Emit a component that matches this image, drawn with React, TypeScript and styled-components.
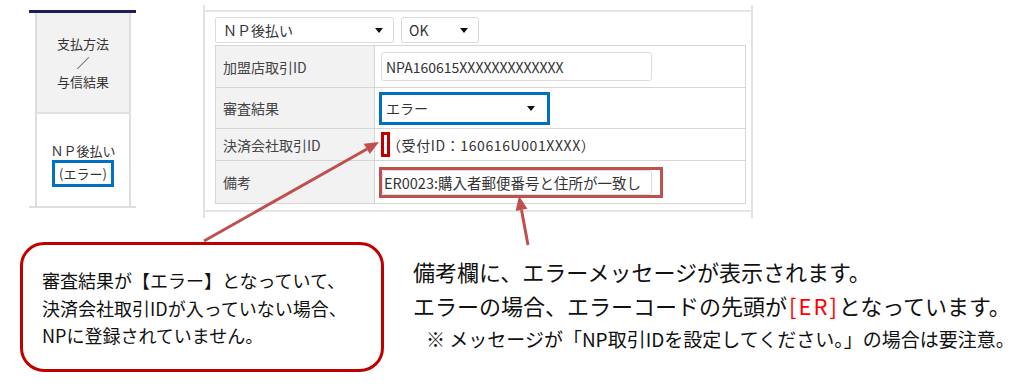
import { createGlobalStyle, styled } from "styled-components";

const GlobalStyle = createGlobalStyle`
  html, body {
    margin: 0;
    padding: 0;
    background: #ffffff;
  }
  body {
    font-family: "Noto Sans CJK JP", "Noto Sans", sans-serif;
  }
`;

const Page = styled.div`
  position: relative;
  width: 1024px;
  height: 392px;
  overflow: hidden;
  background: #ffffff;
`;

const TopRow = styled.div`
  display: flex;
  align-items: flex-start;
  height: 217px;
`;

/* left summary column */
const SummaryPanel = styled.div`
  margin: 10px 0 0 29px;
  width: 107px;
  border-top: 3px solid #1e1e5a;
  border-bottom: 2px solid #dedede;
`;

const SummaryColumn = styled.div`
  margin: 0 5px 0 6px;
  border-left: 2px solid #dedede;
  border-right: 2px solid #dedede;
`;

const SummaryHead = styled.div`
  height: 99px;
  background: #f2f2f2;
  border-bottom: 2px solid #e2e2e2;
  display: flex;
  flex-direction: column;
  align-items: center;
  justify-content: center;
  font-size: 13px;
  line-height: 19px;
  color: #333;
`;

const SummaryBody = styled.div`
  height: 92px;
  display: flex;
  flex-direction: column;
  align-items: center;
  padding-top: 28px;
  box-sizing: border-box;
  font-size: 13px;
  line-height: 17px;
  color: #333;
`;

const BlueMark = styled.span`
  margin-top: 1px;
  padding: 2px 4px;
  border: 3px solid #0070c0;
  line-height: 17px;
`;

/* form panel */
const FormPanel = styled.div`
  margin: 5px 0 0 67px;
  width: 550px;
  box-sizing: border-box;
  padding: 5px 0 6px;
  border-left: 2px solid #e2e2e2;
  border-right: 2px solid #e2e2e2;
`;

const FormInner = styled.div`
  border-top: 2px solid #e6e6e6;
  border-bottom: 2px solid #e6e6e6;
  padding: 5px 5px 6px 10px;
`;

const SelectRow = styled.div`
  display: flex;
  gap: 7px;
  margin-bottom: 2px;
`;

const Select = styled.div<{ width: number }>`
  width: ${(p) => p.width}px;
  height: 26px;
  box-sizing: border-box;
  border: 1px solid #dcdcdc;
  border-radius: 2px;
  background: #fff;
  display: flex;
  align-items: center;
  justify-content: space-between;
  padding: 0 10px 0 7px;
  font-size: 14px;
  color: #333;
`;

const Caret = styled.span`
  width: 0;
  height: 0;
  border-left: 4px solid transparent;
  border-right: 4px solid transparent;
  border-top: 5px solid #111;
`;

const Table = styled.div`
  display: grid;
  grid-template-columns: 159px 1fr;
  grid-template-rows: 42px 41px 32px 42px;
  border: 1px solid #d6d6d6;
`;

const LabelCell = styled.div<{ last?: boolean }>`
  background: #f2f2f2;
  border-bottom: ${(p) => (p.last ? "none" : "1px solid #d6d6d6")};
  border-right: 1px solid #d6d6d6;
  display: flex;
  align-items: center;
  padding-left: 7px;
  font-size: 14px;
  color: #444;
`;

const ValueCell = styled.div<{ last?: boolean; inset?: number }>`
  border-bottom: ${(p) => (p.last ? "none" : "1px solid #d6d6d6")};
  display: flex;
  align-items: center;
  padding-left: ${(p) => p.inset ?? 6}px;
  font-size: 14px;
  color: #333;
  white-space: nowrap;
`;

const TextInput = styled.div`
  width: 271px;
  height: 29px;
  box-sizing: border-box;
  border: 1px solid #dcdcdc;
  border-radius: 3px;
  display: flex;
  align-items: center;
  padding-left: 4px;
  white-space: nowrap;
  overflow: hidden;
`;

const Highlight = styled.div<{ color: string }>`
  border: 3px solid ${(p) => p.color};
  display: flex;
`;

const BlueSelect = styled(Select)`
  border: none;
  border-radius: 0;
  height: 27px;
  padding: 0 12px 0 4px;
`;

const NoteInput = styled(TextInput)`
  width: 270px;
  height: 25px;
  margin-right: 8px;
  padding-left: 1px;
  font-size: 14.5px;
`;

const EmptyMark = styled.span`
  display: inline-block;
  width: 3px;
  height: 19px;
  border: 3px solid #c00000;
  margin-right: -3px;
`;

const IdText = styled.span`
  letter-spacing: 0.6px;
`;

/* bottom row */
const BottomRow = styled.div`
  display: flex;
  align-items: flex-start;
`;

const Callout = styled.div`
  margin: 25px 0 0 20px;
  width: 364px;
  height: 130px;
  box-sizing: border-box;
  border: 3px solid #c00000;
  border-radius: 24px;
  padding: 22px 0 0 19px;
  font-size: 18px;
  line-height: 27.5px;
  color: #111;
  white-space: nowrap;
`;

const Notes = styled.div`
  margin: 37px 0 0 29px;
  color: #111;
`;

const NoteLine = styled.div<{ small?: boolean }>`
  font-size: ${(p) => (p.small ? "19px" : "22px")};
  line-height: ${(p) => (p.small ? "33px" : "34px")};
  margin-left: ${(p) => (p.small ? "13px" : "0")};
  white-space: nowrap;
`;

const Red = styled.span`
  color: #ff0000;
  letter-spacing: 2px;
  margin-left: 2px;
`;

const Overlay = styled.svg`
  position: absolute;
  left: 0;
  top: 0;
  pointer-events: none;
`;

export default function App() {
  return (
    <Page>
      <GlobalStyle />
      <TopRow>
        <SummaryPanel>
          <SummaryColumn>
            <SummaryHead>
              <span>支払方法</span>
              <span>／</span>
              <span>与信結果</span>
            </SummaryHead>
            <SummaryBody>
              <span>ＮＰ後払い</span>
              <BlueMark>(エラー)</BlueMark>
            </SummaryBody>
          </SummaryColumn>
        </SummaryPanel>

        <FormPanel>
          <FormInner>
            <SelectRow>
              <Select width={179}>
                ＮＰ後払い
                <Caret />
              </Select>
              <Select width={78}>
                OK
                <Caret />
              </Select>
            </SelectRow>
            <Table>
              <LabelCell>加盟店取引ID</LabelCell>
              <ValueCell>
                <TextInput>NPA160615XXXXXXXXXXXXX</TextInput>
              </ValueCell>
              <LabelCell>審査結果</LabelCell>
              <ValueCell inset={4}>
                <Highlight color="#0070c0">
                  <BlueSelect width={165}>
                    エラー
                    <Caret />
                  </BlueSelect>
                </Highlight>
              </ValueCell>
              <LabelCell>決済会社取引ID</LabelCell>
              <ValueCell>
                <EmptyMark />
                <IdText>（受付ID：160616U001XXXX）</IdText>
              </ValueCell>
              <LabelCell last>備考</LabelCell>
              <ValueCell last inset={4}>
                <Highlight color="#c0504d">
                  <NoteInput>ER0023:購入者郵便番号と住所が一致し</NoteInput>
                </Highlight>
              </ValueCell>
            </Table>
          </FormInner>
        </FormPanel>
      </TopRow>

      <BottomRow>
        <Callout>
          審査結果が【エラー】となっていて、
          <br />
          決済会社取引IDが入っていない場合、
          <br />
          NPに登録されていません。
        </Callout>
        <Notes>
          <NoteLine>備考欄に、エラーメッセージが表示されます。</NoteLine>
          <NoteLine>
            エラーの場合、エラーコードの先頭が<Red>[ER]</Red>となっています。
          </NoteLine>
          <NoteLine small>
            ※ メッセージが「NP取引IDを設定してください。」の場合は要注意。
          </NoteLine>
        </Notes>
      </BottomRow>

      <Overlay width={1024} height={392} viewBox="0 0 1024 392">
        <line x1={204} y1={241} x2={367} y2={149} stroke="#c0504d" strokeWidth={3} />
        <polygon points="379,142 369.8,154.1 363.8,143.7" fill="#c0504d" />
        <line x1={528} y1={245} x2={521.5} y2={210} stroke="#c0504d" strokeWidth={3} />
        <polygon points="519,196 527.4,208.7 515.6,210.9" fill="#c0504d" />
      </Overlay>
    </Page>
  );
}
